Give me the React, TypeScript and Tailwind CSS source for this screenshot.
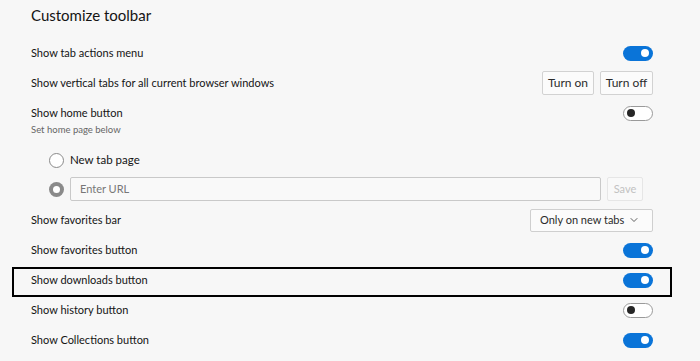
import { ChevronDown } from "lucide-react";

function Toggle({ on }: { on: boolean }) {
  if (on) {
    return (
      <span className="flex h-[15px] w-[30px] items-center justify-end rounded-full bg-[#0a74d8] pr-[4px]">
        <span className="h-[8px] w-[8px] rounded-full bg-white" />
      </span>
    );
  }
  return (
    <span className="flex h-[15px] w-[30px] items-center rounded-full border border-[#9a9a9a] bg-white pl-[3px]">
      <span className="h-[8px] w-[8px] rounded-full bg-[#262626]" />
    </span>
  );
}

function ToggleRow({ label, on }: { label: string; on: boolean }) {
  return (
    <div className="flex h-[30px] items-center justify-between">
      <span>{label}</span>
      <Toggle on={on} />
    </div>
  );
}

function SmallButton({ children, width }: { children: React.ReactNode; width: string }) {
  return (
    <button
      className={`h-[24px] whitespace-nowrap rounded-[2px] border border-[#d2d2d2] bg-[#fbfbfb] text-[12px] text-[#2b2b2b] ${width}`}
    >
      {children}
    </button>
  );
}

export default function App() {
  return (
    <div
      className="min-h-[361px] bg-[#f7f7f7] pl-[31px] pr-[47px] text-[11px] text-[#141414]"
      style={{ fontFamily: 'Lato, "Noto Sans", sans-serif' }}
    >
      <h1 className="flex h-[38px] items-center pb-[8px] text-[15px] font-normal text-[#141414]">
        Customize toolbar
      </h1>

      <ToggleRow label="Show tab actions menu" on />

      <div className="flex h-[30px] items-center justify-between">
        <span>Show vertical tabs for all current browser windows</span>
        <div className="flex gap-[6px]">
          <SmallButton width="w-[52px]">Turn on</SmallButton>
          <SmallButton width="w-[53px]">Turn off</SmallButton>
        </div>
      </div>

      <div className="pt-[6px]">
        <div className="flex h-[18px] items-center justify-between">
          <span>Show home button</span>
          <Toggle on={false} />
        </div>
        <p className="mt-[1px] text-[9.5px] leading-[14px] text-[#666]">Set home page below</p>
      </div>

      <div className="mt-[8px] flex h-[30px] items-center gap-[6px] pl-[18px]">
        <span className="h-[15px] w-[15px] rounded-full border border-[#8a8a8a] bg-white" />
        <span className="text-[11.5px]">New tab page</span>
      </div>

      <div className="mt-[2px] flex h-[24px] items-center gap-[6px] pl-[18px] pr-[10px]">
        <span className="flex h-[15px] w-[15px] shrink-0 items-center justify-center rounded-full bg-[#8a8a8a]">
          <span className="h-[7px] w-[7px] rounded-full bg-white" />
        </span>
        <div className="flex h-[24px] flex-1 items-center rounded-[2px] border border-[#c9c9c9] bg-[#f9f9f9] pl-[9px] text-[11px] text-[#777]">
          Enter URL
        </div>
        <button className="h-[24px] w-[36px] rounded-[2px] border border-[#e6e6e6] bg-[#f9f9f9] text-[11px] text-[#c2c2c2]">
          Save
        </button>
      </div>

      <div className="mt-[4px] flex h-[30px] items-center justify-between">
        <span>Show favorites bar</span>
        <div className="flex h-[23px] w-[123px] items-center justify-between whitespace-nowrap rounded-[2px] border border-[#cfcfcf] bg-[#fbfbfb] pl-[9px] pr-[12px] text-[11px] text-[#2b2b2b]">
          <span>Only on new tabs</span>
          <ChevronDown size={12} strokeWidth={1.5} />
        </div>
      </div>

      <ToggleRow label="Show favorites button" on />

      <div className="relative">
        <ToggleRow label="Show downloads button" on />
        <div className="pointer-events-none absolute bottom-[-2px] left-[-19px] right-[-19px] top-[2px] border-2 border-black" />
      </div>

      <ToggleRow label="Show history button" on={false} />
      <ToggleRow label="Show Collections button" on />
    </div>
  );
}
